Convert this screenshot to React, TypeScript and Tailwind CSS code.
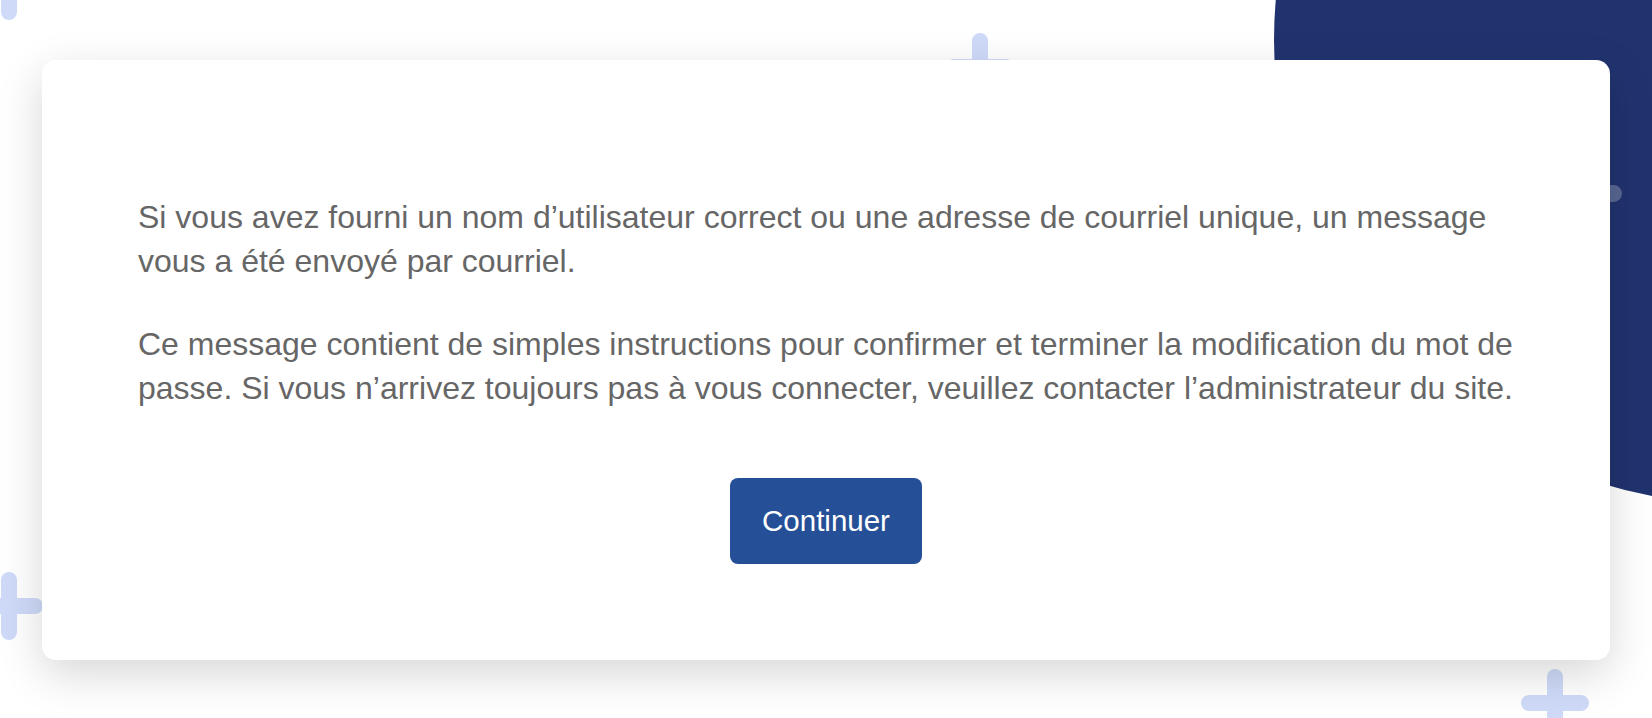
function Plus({ className }: { className: string }) {
  return (
    <svg className={`absolute ${className}`} width="68" height="68" viewBox="0 0 68 68" fill="none">
      <path d="M34 8v52M8 34h52" stroke="#cedaf8" strokeWidth="16" strokeLinecap="round" />
    </svg>
  );
}

export default function App() {
  return (
    <div
      className="relative h-[718px] w-full overflow-hidden bg-white"
      style={{ fontFamily: '"Liberation Sans", Arial, Helvetica, sans-serif' }}
    >
      {/* background decorations */}
      <div className="absolute left-[1274px] top-[-424px] h-[928px] w-[928px] rounded-full bg-[#21336f]" />
      <div className="absolute left-[1560px] top-[185px] h-[17px] w-[62px] rounded-full bg-white/25" />
      <Plus className="left-[-25px] top-[-48px]" />
      <Plus className="left-[946px] top-[33px]" />
      <Plus className="left-[-25px] top-[572px]" />
      <Plus className="left-[1521px] top-[669px]" />

      <div className="relative px-[42px] pt-[60px]">
        <div className="flex h-[600px] w-[1568px] flex-col gap-[39px] rounded-[14px] bg-white pl-[96px] pr-[86px] pt-[135px] text-[32px] leading-[44px] text-[#666666] shadow-[0_14px_45px_rgba(0,0,0,0.16)]">
          <p>
            Si vous avez fourni un nom d’utilisateur correct ou une adresse de courriel unique, un message vous a été envoyé par courriel.
          </p>
          <p>
            Ce message contient de simples instructions pour confirmer et terminer la modification du mot de passe. Si vous n’arrivez toujours pas à vous connecter, veuillez contacter l’administrateur du site.
          </p>
          <div className="mt-[29px] flex justify-center pr-[10px]">
            <button className="h-[86px] w-[192px] rounded-[8px] bg-[#254f96] text-[29.5px] text-white">
              Continuer
            </button>
          </div>
        </div>
      </div>
    </div>
  );
}
